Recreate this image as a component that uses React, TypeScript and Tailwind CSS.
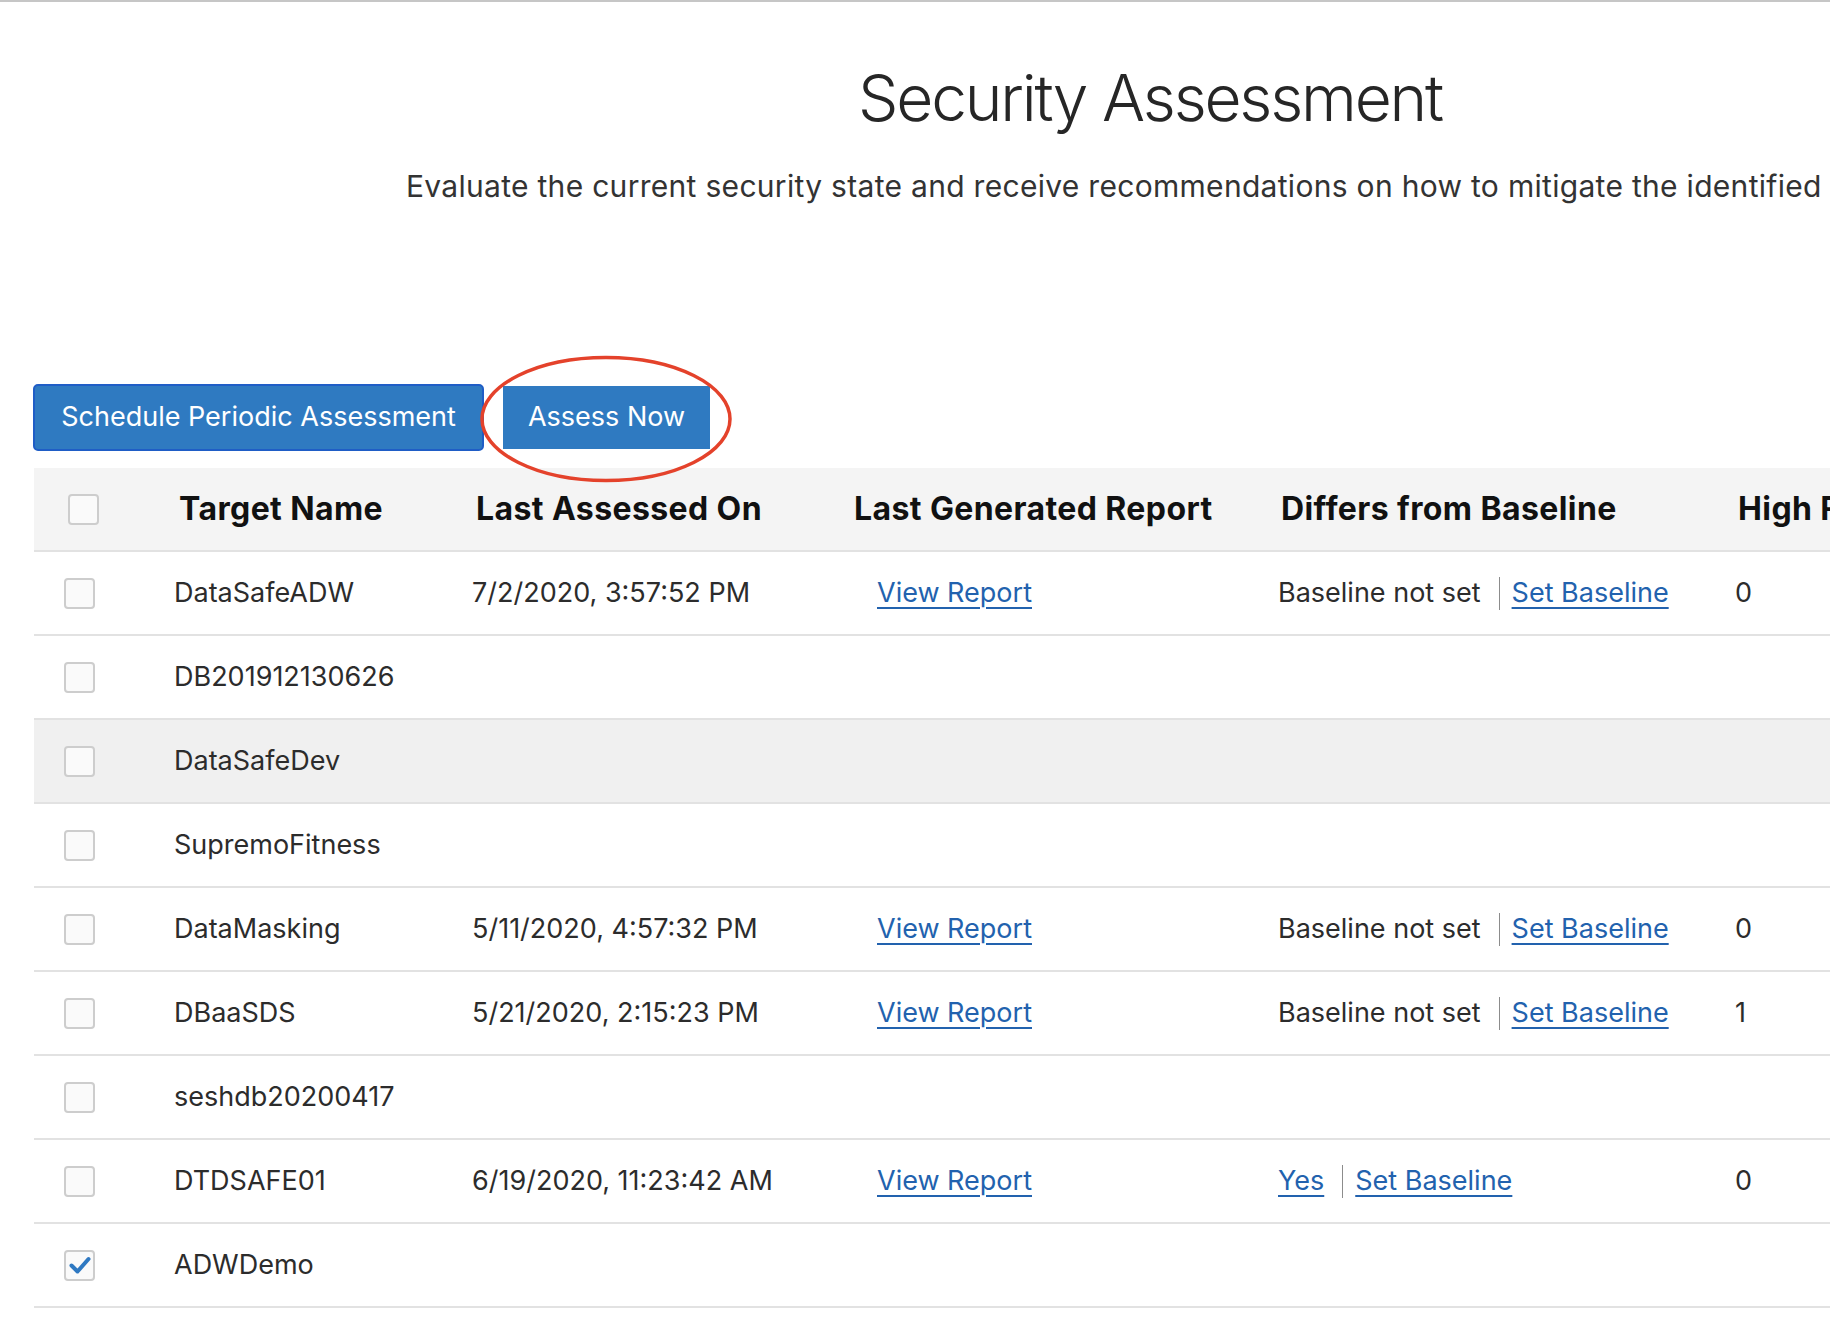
import React from 'react';

interface Target {
  name: string;
  date?: string;
  baseline?: 'not' | 'yes';
  high?: string;
  hover?: boolean;
  checked?: boolean;
}

const targets: Target[] = [
  { name: 'DataSafeADW', date: '7/2/2020, 3:57:52 PM', baseline: 'not', high: '0' },
  { name: 'DB201912130626' },
  { name: 'DataSafeDev', hover: true },
  { name: 'SupremoFitness' },
  { name: 'DataMasking', date: '5/11/2020, 4:57:32 PM', baseline: 'not', high: '0' },
  { name: 'DBaaSDS', date: '5/21/2020, 2:15:23 PM', baseline: 'not', high: '1' },
  { name: 'seshdb20200417' },
  { name: 'DTDSAFE01', date: '6/19/2020, 11:23:42 AM', baseline: 'yes', high: '0' },
  { name: 'ADWDemo', checked: true },
];

const Checkbox: React.FC<{ checked?: boolean }> = ({ checked }) => (
  <div className="w-[31px] h-[31px] rounded-[4px] border-2 border-[#cdcdcd] bg-[#fafafa] flex items-center justify-center">
    {checked && (
      <svg width="24" height="24" viewBox="0 0 24 24">
        <path d="M3.5 12.5 L9.5 18.5 L20.5 6" fill="none" stroke="#2f79c2" strokeWidth="4" strokeLinecap="round" strokeLinejoin="round" />
      </svg>
    )}
  </div>
);

const Link: React.FC<{ children: React.ReactNode }> = ({ children }) => (
  <a className="text-[#2262ae] underline underline-offset-[5px] decoration-[2px] cursor-pointer">{children}</a>
);

export default function App() {
  return (
    <div className="w-[1830px] h-[1332px] overflow-hidden bg-white border-t-2 border-[#c6c6c6] font-[Inter,sans-serif]">
      <div className="relative w-[2300px]">
        {/* Heading */}
        <h1 className="pt-[64px] text-center text-[64px] leading-[64px] font-light tracking-[-2.2px] text-[#262626]">
          Security Assessment
        </h1>
        <p className="mt-[41px] pl-[14px] text-center text-[30px] leading-[30px] tracking-[0.3px] text-[#333333]">
          Evaluate the current security state and receive recommendations on how to mitigate the identified risks.
        </p>

        {/* Actions */}
        <div className="mt-[183px] ml-[33px] flex items-center gap-[19px]">
          <button className="w-[451px] h-[67px] rounded-[5px] border-2 border-[#1f5dc6] bg-[#2f7ac1] text-white text-[27px]">
            Schedule Periodic Assessment
          </button>
          <button className="w-[207px] h-[63px] bg-[#2f7ac1] text-white text-[27px]">
            Assess Now
          </button>
        </div>

        {/* Annotation */}
        <svg className="absolute left-[478px] top-[352px]" width="256" height="130" viewBox="0 0 256 130">
          <ellipse cx="128" cy="65" rx="124" ry="61.5" fill="none" stroke="#e4422b" strokeWidth="3.5" />
        </svg>

        {/* Table */}
        <div className="mt-[17px] ml-[34px]">
          <div className="h-[84px] bg-[#f4f4f4] border-b-2 border-[#e2e2e2] pl-[34px] grid grid-cols-[111px_297px_378px_427px_457px_1fr] items-center text-[32px] font-bold tracking-[0.4px] text-[#111111]">
            <Checkbox />
            <div>Target Name</div>
            <div>Last Assessed On</div>
            <div>Last Generated Report</div>
            <div>Differs from Baseline</div>
            <div>High Risk</div>
          </div>

          {targets.map((t) => (
            <div
              key={t.name}
              className={`h-[84px] border-b-2 border-[#e2e2e2] pl-[30px] grid grid-cols-[110px_298px_405px_401px_457px_1fr] items-center text-[27px] text-[#2c2c2c] ${t.hover ? 'bg-[#f0f0f0]' : ''}`}
            >
              <Checkbox checked={t.checked} />
              <div>{t.name}</div>
              <div>{t.date}</div>
              <div>{t.date && <Link>View Report</Link>}</div>
              <div className="flex items-center">
                {t.baseline === 'not' && <span>Baseline not set</span>}
                {t.baseline === 'yes' && <Link>Yes</Link>}
                {t.baseline && (
                  <>
                    <span className="ml-[18px] mr-[12px] w-px h-[33px] bg-[#8c8c8c]" />
                    <Link>Set Baseline</Link>
                  </>
                )}
              </div>
              <div>{t.high}</div>
            </div>
          ))}
        </div>
      </div>
    </div>
  );
}
